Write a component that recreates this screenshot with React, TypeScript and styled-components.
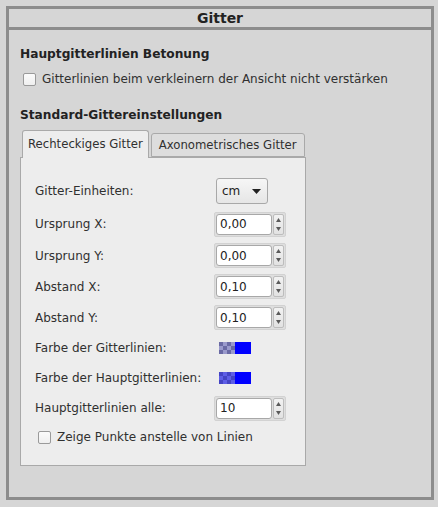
import React from "react";
import styled, { createGlobalStyle } from "styled-components";

const Global = createGlobalStyle`
  html, body { margin: 0; padding: 0; background: #d6d6d6; }
  body { font-family: "DejaVu Sans", sans-serif; font-size: 12px; color: #303030; }
`;

const Frame = styled.div`
  box-sizing: border-box;
  margin: 6px;
  width: 428px;
  height: 494px;
  border: 3px solid #8d8d8d;
  background: #d6d6d6;
`;

const Header = styled.div`
  height: 18px;
  line-height: 18px;
  text-align: center;
  font-weight: bold;
  font-size: 14px;
  color: #222;
  border-bottom: 3px solid #8d8d8d;
`;

const Body = styled.div`
  padding: 16px 0 0 11px;
  display: flex;
  flex-direction: column;
`;

const SectionTitle = styled.div<{ $mt?: number }>`
  font-weight: bold;
  font-size: 12.2px;
  line-height: 16px;
  color: #222;
  margin-top: ${(p) => p.$mt ?? 0}px;
`;

const CheckRow = styled.label<{ $mt?: number; $ml?: number }>`
  display: flex;
  align-items: center;
  gap: 6px;
  height: 16px;
  margin-top: ${(p) => p.$mt ?? 0}px;
  margin-left: ${(p) => p.$ml ?? 0}px;
`;

const Box = styled.span`
  box-sizing: border-box;
  width: 13px;
  height: 13px;
  border: 1px solid #9a9a9a;
  border-radius: 2px;
  background: linear-gradient(#fbfbfb, #efefef);
`;

const TabBar = styled.div`
  display: flex;
  align-items: flex-end;
  gap: 2px;
  padding-left: 2px;
  margin-top: 7px;
  width: 290px;
  position: relative;
  z-index: 1;
`;

const Tab = styled.div<{ $active?: boolean }>`
  box-sizing: border-box;
  flex-shrink: 0;
  white-space: nowrap;
  font-size: 11.7px;
  height: ${(p) => (p.$active ? 28 : 24)}px;
  margin-bottom: ${(p) => (p.$active ? -1 : 0)}px;
  padding: 0 ${(p) => (p.$active ? 5 : 7)}px;
  display: flex;
  align-items: center;
  border: 1px solid #a9a9a9;
  border-bottom: ${(p) => (p.$active ? "none" : "1px solid #a9a9a9")};
  border-radius: 3px 3px 0 0;
  background: ${(p) => (p.$active ? "#ededed" : "#dddddd")};
  color: #303030;
  padding-bottom: ${(p) => (p.$active ? 2 : 0)}px;
`;

const Pane = styled.div`
  box-sizing: border-box;
  width: 286px;
  height: 309px;
  border: 1px solid #a9a9a9;
  background: #ededed;
  padding: 16px 0 0 14px;
  display: flex;
  flex-direction: column;
`;

const Row = styled.div<{ $h: number }>`
  display: grid;
  grid-template-columns: 179px auto;
  align-items: center;
  height: ${(p) => p.$h}px;
`;

const Label = styled.span`
  color: #303030;
`;

const Combo = styled.div`
  box-sizing: border-box;
  margin-left: 2px;
  width: 52px;
  height: 26px;
  border: 1px solid #a8a8a8;
  border-radius: 3px;
  background: linear-gradient(#f6f6f6, #e6e6e6);
  display: flex;
  align-items: center;
  justify-content: space-between;
  padding: 0 6px 0 5px;
  color: #222;
`;

const Spin = styled.div`
  box-sizing: border-box;
  width: 72px;
  height: 25px;
  display: flex;
  padding: 1px;
  border: 1px solid #d2d2d2;
  background: #dedede;
  border-radius: 2px;
`;

const SpinField = styled.div`
  box-sizing: border-box;
  flex: 1;
  background: #fff;
  border: 1px solid #a8a8a8;
  border-radius: 3px;
  padding-left: 3px;
  display: flex;
  align-items: center;
  color: #222;
`;

const SpinButtons = styled.div`
  box-sizing: border-box;
  width: 11px;
  margin-left: 1px;
  border: 1px solid #bdbdbd;
  border-radius: 2px;
  background: linear-gradient(#f2f2f2, #e2e2e2);
  display: flex;
  flex-direction: column;
  align-items: center;
  justify-content: space-between;
  padding: 3px 0;
`;

const Swatch = styled.div<{ $light: string; $dark: string }>`
  margin-left: 5px;
  width: 32px;
  height: 12px;
  display: flex;
  &::before {
    content: "";
    width: 16px;
    height: 12px;
    background: repeating-conic-gradient(${(p) => p.$light} 0 25%, ${(p) => p.$dark} 0 50%) 0 0 / 8px 8px;
  }
  &::after {
    content: "";
    width: 16px;
    height: 12px;
    background: #0000ff;
  }
`;

const Up = () => (
  <svg width="5" height="4" viewBox="0 0 5 4"><path d="M2.5 0 L5 4 L0 4 Z" fill="#5a5a5a" /></svg>
);
const Down = () => (
  <svg width="5" height="4" viewBox="0 0 5 4"><path d="M0 0 L5 0 L2.5 4 Z" fill="#5a5a5a" /></svg>
);

const SpinBox = ({ value }: { value: string }) => (
  <Spin>
    <SpinField>{value}</SpinField>
    <SpinButtons>
      <Up />
      <Down />
    </SpinButtons>
  </Spin>
);

export default function App() {
  return (
    <>
      <Global />
      <Frame>
        <Header>Gitter</Header>
        <Body>
          <SectionTitle>Hauptgitterlinien Betonung</SectionTitle>
          <CheckRow $mt={9} $ml={3}>
            <Box />
            <span>Gitterlinien beim verkleinern der Ansicht nicht verstärken</span>
          </CheckRow>
          <SectionTitle $mt={20}>Standard-Gittereinstellungen</SectionTitle>
          <TabBar>
            <Tab $active>Rechteckiges Gitter</Tab>
            <Tab>Axonometrisches Gitter</Tab>
          </TabBar>
          <Pane>
            <Row $h={34}>
              <Label>Gitter-Einheiten:</Label>
              <Combo>
                <span>cm</span>
                <svg width="9" height="5" viewBox="0 0 9 5"><path d="M0 0 L9 0 L4.5 5 Z" fill="#222" /></svg>
              </Combo>
            </Row>
            <Row $h={32}>
              <Label>Ursprung X:</Label>
              <SpinBox value="0,00" />
            </Row>
            <Row $h={31}>
              <Label>Ursprung Y:</Label>
              <SpinBox value="0,00" />
            </Row>
            <Row $h={31}>
              <Label>Abstand X:</Label>
              <SpinBox value="0,10" />
            </Row>
            <Row $h={31}>
              <Label>Abstand Y:</Label>
              <SpinBox value="0,10" />
            </Row>
            <Row $h={30}>
              <Label>Farbe der Gitterlinien:</Label>
              <Swatch $light="#9a9acc" $dark="#6a6aa4" />
            </Row>
            <Row $h={30}>
              <Label>Farbe der Hauptgitterlinien:</Label>
              <Swatch $light="#5e5ee6" $dark="#4444c4" />
            </Row>
            <Row $h={30}>
              <Label>Hauptgitterlinien alle:</Label>
              <SpinBox value="10" />
            </Row>
            <CheckRow $mt={6} $ml={3}>
              <Box />
              <span>Zeige Punkte anstelle von Linien</span>
            </CheckRow>
          </Pane>
        </Body>
      </Frame>
    </>
  );
}
